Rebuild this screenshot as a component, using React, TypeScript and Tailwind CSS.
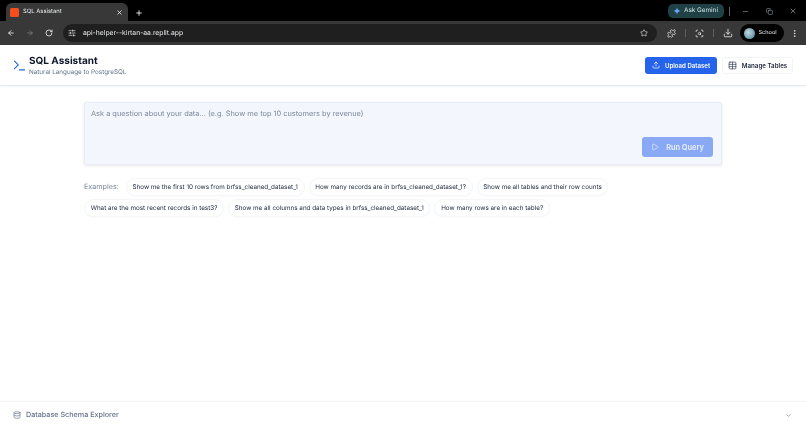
import React from 'react';
import {
  ArrowLeft,
  ArrowRight,
  ChevronDown,
  Copy,
  Database,
  Download,
  EllipsisVertical,
  Minus,
  Play,
  Plus,
  Puzzle,
  RotateCw,
  ScanSearch,
  SlidersHorizontal,
  Star,
  Table,
  Terminal,
  Upload,
  X,
} from 'lucide-react';

const row1 = [
  'Show me the first 10 rows from brfss_cleaned_dataset_1',
  'How many records are in brfss_cleaned_dataset_1?',
  'Show me all tables and their row counts',
];
const row2 = [
  'What are the most recent records in test3?',
  'Show me all columns and data types in brfss_cleaned_dataset_1',
  'How many rows are in each table?',
];

function Chip({ text }: { text: string }) {
  return (
    <span className="flex h-[18px] items-center rounded-full border border-[#f4f6f9] bg-white px-[5.7px] text-[6.3px] leading-none text-[#1e293b] shadow-[0_1px_1px_rgba(15,23,42,0.02)] whitespace-nowrap">
      {text}
    </span>
  );
}

function BrowserChrome() {
  return (
    <div>
      <div className="flex h-[21px] items-end bg-black">
        <div className="ml-[6px] flex h-[18px] w-[122px] items-center rounded-t-[6px] bg-[#383838] pl-[4px] pr-[5px]">
          <span className="h-[9px] w-[9px] rounded-[1.5px] bg-[#f24e1e]" />
          <span className="ml-[4px] flex-1 text-[5.9px] text-[#e8eaed]">SQL Assistant</span>
          <X className="h-[7px] w-[7px] text-white" strokeWidth={2.5} />
        </div>
        <Plus className="mb-[4px] ml-[7px] h-[8px] w-[8px] text-white" strokeWidth={2.5} />
        <div className="mb-[3px] ml-auto flex items-center">
          <div className="flex h-[14px] w-[56px] items-center gap-[3px] rounded-[5px] bg-[#1f4044] pl-[5px]">
            <svg viewBox="0 0 24 24" className="h-[8px] w-[8px]">
              <path d="M12 1c1 7 4 10 11 11-7 1-10 4-11 11-1-7-4-10-11-11 7-1 10-4 11-11z" fill="#6aa5f5" />
            </svg>
            <span className="text-[6.3px] font-medium text-[#c4d4d6]">Ask Gemini</span>
          </div>
          <span className="ml-[5px] h-[9px] w-px bg-[#5f6368]" />
          <div className="ml-[12px] mr-[9px] flex w-[55px] items-center justify-between">
            <Minus className="h-[7px] w-[7px] text-[#9aa0a6]" />
            <Copy className="h-[7px] w-[7px] text-[#9aa0a6]" />
            <X className="h-[8px] w-[8px] text-[#9aa0a6]" />
          </div>
        </div>
      </div>
      <div className="flex h-[24px] items-center bg-[#383838] pl-[7px]">
        <ArrowLeft className="h-[8px] w-[8px] text-[#e8eaed]" strokeWidth={2.5} />
        <ArrowRight className="ml-[11px] h-[8px] w-[8px] text-[#7b7d80]" strokeWidth={2.5} />
        <RotateCw className="ml-[11px] h-[8px] w-[8px] text-[#e8eaed]" strokeWidth={2.5} />
        <div className="ml-[10px] flex h-[18px] w-[594px] items-center rounded-full bg-[#1f1f1f] pl-[5px] pr-[9px]">
          <SlidersHorizontal className="h-[8px] w-[8px] text-[#e8eaed]" />
          <span className="ml-[7px] flex-1 text-[6.8px] text-[#e8eaed]">api-helper--kirtan-aa.replit.app</span>
          <Star className="h-[8px] w-[8px] text-[#e8eaed]" />
        </div>
        <Puzzle className="ml-[9.5px] h-[9px] w-[9px] text-[#e8eaed]" />
        <span className="ml-[9.5px] h-[8px] w-px bg-[#5f6368]" />
        <ScanSearch className="ml-[9px] h-[9px] w-[9px] text-[#e8eaed]" />
        <span className="ml-[9px] h-[8px] w-px bg-[#5f6368]" />
        <Download className="ml-[8.5px] h-[10px] w-[10px] text-[#e8eaed]" />
        <div className="ml-[7px] flex h-[18px] w-[44px] items-center rounded-full bg-black pl-[4px]">
          <span className="h-[11px] w-[11px] rounded-full bg-[radial-gradient(circle_at_40%_40%,#c5d6dd,#3f7f94)]" />
          <span className="ml-[4px] text-[5.6px] text-[#e8eaed]">School</span>
        </div>
        <EllipsisVertical className="ml-[6.5px] h-[9px] w-[9px] text-[#e8eaed]" />
      </div>
    </div>
  );
}

export default function App() {
  return (
    <div className="flex h-[428px] w-[806px] flex-col overflow-hidden bg-white font-['Inter',sans-serif] antialiased will-change-transform [text-rendering:geometricPrecision]">
      <BrowserChrome />

      <header className="flex h-[41px] items-center justify-between border-b border-[#e2e8f0] pl-[11.5px] pr-[13px] shadow-[0_1px_2px_rgba(15,23,42,0.04)]">
        <div className="flex items-center gap-[2.5px]">
          <Terminal className="h-[15px] w-[15px] text-[#2563eb]" strokeWidth={1.8} />
          <div className="pt-[2px]">
            <h1 className="text-[10px] leading-[13px] font-bold text-[#0f172a]">SQL Assistant</h1>
            <p className="text-[6.3px] leading-[9px] text-[#64748b]">Natural Language to PostgreSQL</p>
          </div>
        </div>
        <div className="flex items-center gap-[5px]">
          <button className="flex h-[17px] w-[72px] items-center justify-center gap-[5px] rounded-[3px] bg-[#2563eb] text-[6.1px] font-semibold text-white">
            <Upload className="h-[8px] w-[8px]" />
            <span className="pt-[2px]">Upload Dataset</span>
          </button>
          <button className="flex h-[17px] w-[71px] items-center justify-center gap-[5px] rounded-[3px] border border-[#f1f5f9] bg-white text-[6.2px] font-semibold text-[#1e293b]">
            <Table className="h-[9px] w-[9px]" strokeWidth={1.6} />
            <span className="pt-[2px]">Manage Tables</span>
          </button>
        </div>
      </header>

      <main className="flex-1 px-[84px] pt-[16px]">
        <div className="flex h-[63px] w-[638px] flex-col rounded-[2px] border border-[#e8edf5] bg-[#f3f6fd] pt-[6px] pr-[8px] pb-[7px] pl-[6px] shadow-[0_1px_3px_rgba(15,23,42,0.1)]">
          <p className="text-[7.4px] leading-[10px] text-[#7c8899]">
            Ask a question about your data... (e.g. Show me top 10 customers by revenue)
          </p>
          <button className="mt-auto flex h-[20px] w-[71px] items-center justify-center gap-[7px] self-end rounded-[3px] bg-[#8aa9f5] text-[7.4px] font-semibold text-[#e8eefc]">
            <Play className="h-[8px] w-[8px]" />
            <span className="pt-[2px]">Run Query</span>
          </button>
        </div>

        <div className="mt-[13px] flex items-center">
          <span className="mr-[7px] text-[7.2px] text-[#7c8899]">Examples:</span>
          <div className="flex gap-[4px]">
            {row1.map((t) => (
              <Chip key={t} text={t} />
            ))}
          </div>
        </div>
        <div className="mt-[3px] flex gap-[4px]">
          {row2.map((t) => (
            <Chip key={t} text={t} />
          ))}
        </div>
      </main>

      <footer className="flex h-[27px] items-center justify-between border-t border-[#f1f5f9] pl-[13px] pr-[14px]">
        <div className="flex items-center gap-[5px]">
          <Database className="h-[8px] w-[8px] text-[#64748b]" />
          <span className="text-[7.2px] font-medium text-[#64748b]">Database Schema Explorer</span>
        </div>
        <ChevronDown className="h-[7px] w-[7px] text-[#64748b]" />
      </footer>
    </div>
  );
}
